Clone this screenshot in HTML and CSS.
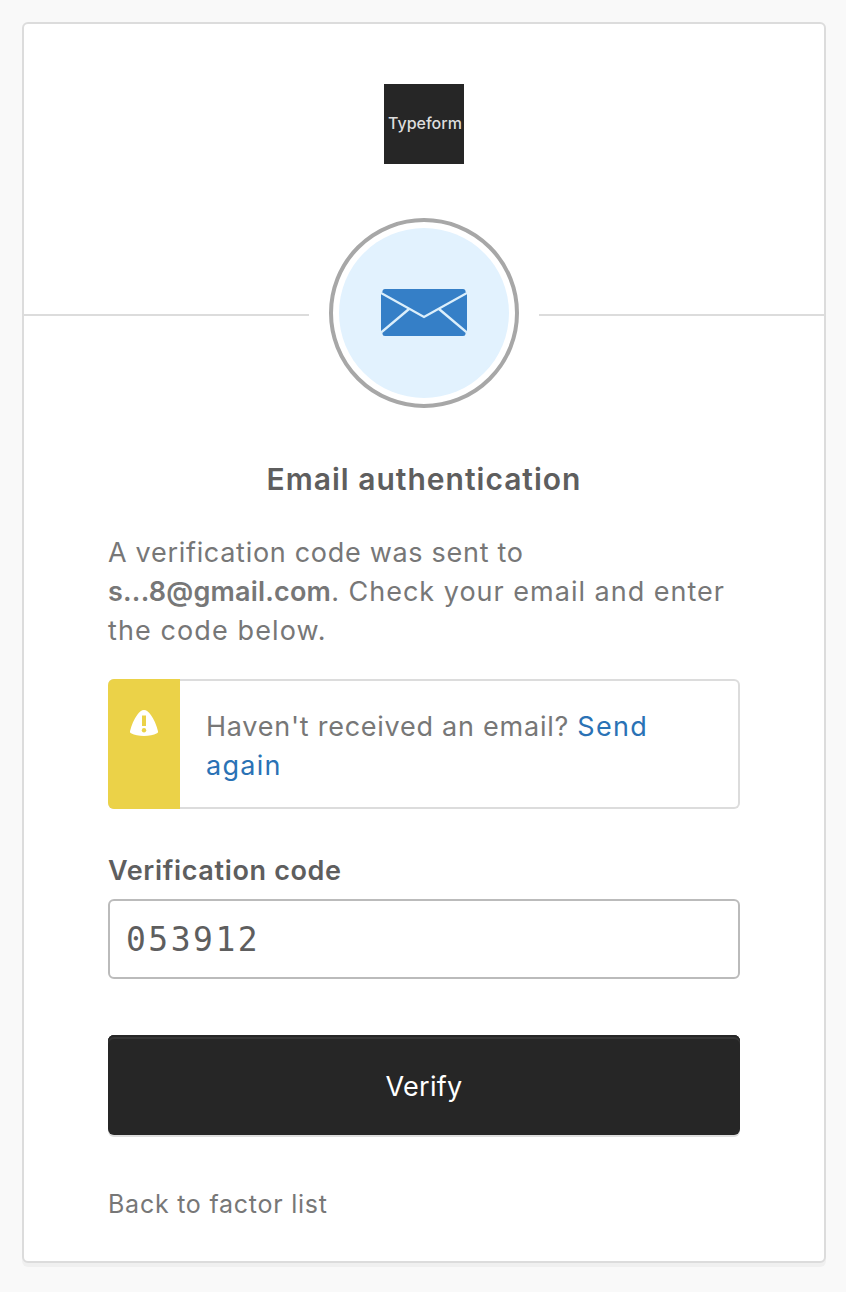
FILE: index.html
```html
<!DOCTYPE html>
<html lang="en">

<head>
    <meta charset="UTF-8">
    <meta name="viewport" content="width=device-width, initial-scale=1.0">
    <title>Email authentication</title>
    <link rel="stylesheet" href="styles.css">
</head>

<body>

    <main class="card">
        <!-- Logo -->
        <header class="card-header">
            <div class="logo">Typeform</div>
        </header>

        <!-- Factor icon with divider lines -->
        <div class="beacon-row">
            <span class="line"></span>
            <div class="beacon">
                <svg class="envelope" viewBox="0 0 86 47" width="86" height="47">
                    <path d="M4 0h78q2.500 0 2.500 2.500L86 5v37l-1.500 2.500q0 2.500-2.500 2.500H4q-2.500 0-2.500-2.500L0 42V5l1.500-2.500Q1.500 0 4 0z" fill="#357fc7"/>
                    <path d="M0 4 43 28 86 4M0 43.500 28 20M86 43.500 58 20" fill="none" stroke="#dceffb" stroke-width="2.400"/>
                </svg>
            </div>
            <span class="line"></span>
        </div>

        <!-- Verification form -->
        <form class="auth-form">
            <h2 class="title">Email authentication</h2>
            <p class="subtitle">
                <span class="row-one">A verification code was sent to</span><br>
                <span class="row-two"><strong>s...8@gmail.com</strong>. Check your email and enter</span><br>
                <span class="row-three">the code below.</span>
            </p>

            <div class="callout">
                <div class="callout-icon">
                    <svg viewBox="0 0 28 26" width="28" height="26">
                        <path d="M14 0C11.500 0 9.500 1.600 7.300 4.700 4.200 9 1.400 15 0 21.200c-.2 1 .1 1.600 1 2C4.500 25 9 26 14 26s9.500-1 13-2.800c.9-.4 1.200-1 1-2C26.600 15 23.800 9 20.700 4.700 18.500 1.600 16.500 0 14 0z" fill="#fff"/>
                        <path d="M12 5.500h4V16h-4z" fill="#ebd248"/>
                        <circle cx="14" cy="20.200" r="2.200" fill="#ebd248"/>
                    </svg>
                </div>
                <p class="callout-text">Haven't received an email? <a href="#">Send<br>again</a></p>
            </div>

            <label class="label" for="code">Verification code</label>
            <input class="code-input" id="code" type="text" value="053912">

            <button class="button" type="button">Verify</button>

            <a class="back-link" href="#">Back to factor list</a>
        </form>
    </main>

</body>

</html>
```
FILE: styles.css
```css
/* General Reset */
* {
    margin: 0;
    padding: 0;
    box-sizing: border-box;
}

body {
    font-family: Inter, 'Liberation Sans', sans-serif;
    font-size: 27px;
    line-height: 39px;
    background-color: #f9f9f9;
    color: #777;
    padding: 22px 20px 29px 22px;
}

.card {
    width: 804px;
    height: 1241px;
    background: #fff;
    border: 2px solid #dcdcdc;
    border-radius: 6px;
    box-shadow: 0 4px 0 #f0f0f0;
}

/* Logo */
.card-header {
    display: flex;
    justify-content: center;
    padding-top: 60px;
}

.logo {
    width: 80px;
    height: 80px;
    background: #262626;
    color: #ddd;
    font-size: 16px;
    font-weight: 500;
    line-height: 78px;
    padding-left: 4px;
    white-space: nowrap;
}

/* Factor icon */
.beacon-row {
    display: flex;
    justify-content: space-between;
    align-items: center;
    margin-top: 54px;
}

.line {
    width: 285px;
    height: 2px;
    margin-top: 4px;
    background: #dcdcdc;
}

.beacon {
    display: flex;
    align-items: center;
    justify-content: center;
    width: 190px;
    height: 190px;
    border: 4px solid #a7a7a7;
    border-radius: 50%;
    padding: 6px;
    background: #e2f2fe content-box;
}

.envelope {
    display: block;
    margin-bottom: 1px;
}

/* Form */
.auth-form {
    padding: 52px 84px 0;
}

.title {
    color: #5e5e5e;
    font-size: 30px;
    font-weight: 600;
    letter-spacing: 1px;
    line-height: 39px;
    text-align: center;
}

.subtitle {
    margin-top: 34px;
    white-space: nowrap;
}

.subtitle strong {
    font-weight: 600;
    letter-spacing: 0.2px;
}

.row-one {
    letter-spacing: 0.7px;
}

.row-two {
    letter-spacing: 1px;
}

.row-three {
    letter-spacing: 1.1px;
}

/* Warning callout */
.callout {
    display: flex;
    height: 130px;
    margin-top: 29px;
    border: 2px solid #dcdcdc;
    border-left: 0;
    border-radius: 6px;
}

.callout-icon {
    width: 72px;
    margin: -2px 0;
    padding: 31px 22px;
    background: #ebd248;
    border-radius: 6px 0 0 6px;
}

.callout-icon svg {
    display: block;
}

.callout-text {
    padding: 26px 0 0 26px;
    letter-spacing: 0.75px;
    white-space: nowrap;
}

.callout-text a {
    color: #2a72b5;
    letter-spacing: 1.3px;
    text-decoration: none;
}

/* Code field */
.label {
    display: block;
    margin-top: 42px;
    color: #5e5e5e;
    font-weight: 600;
    letter-spacing: 0.65px;
}

.code-input {
    display: block;
    width: 100%;
    height: 80px;
    margin-top: 9px;
    padding: 1px 16px 0;
    border: 2px solid #bbb;
    border-radius: 6px;
    color: #5e5e5e;
    font-family: 'DejaVu Sans Mono', monospace;
    font-size: 33px;
    letter-spacing: 2.5px;
}

.button {
    display: block;
    width: 100%;
    height: 100px;
    margin-top: 56px;
    padding-top: 2px;
    background: #262626;
    border: 0;
    border-radius: 6px;
    box-shadow: 0 2px 0 #dedede, inset 0 2px 0 #262626, inset 0 4px 0 #363636;
    color: #fff;
    font-family: inherit;
    font-size: 27px;
    letter-spacing: 0.3px;
}

.back-link {
    display: inline-block;
    margin-top: 50px;
    color: #777;
    font-size: 25px;
    letter-spacing: 0.75px;
    text-decoration: none;
}
```
